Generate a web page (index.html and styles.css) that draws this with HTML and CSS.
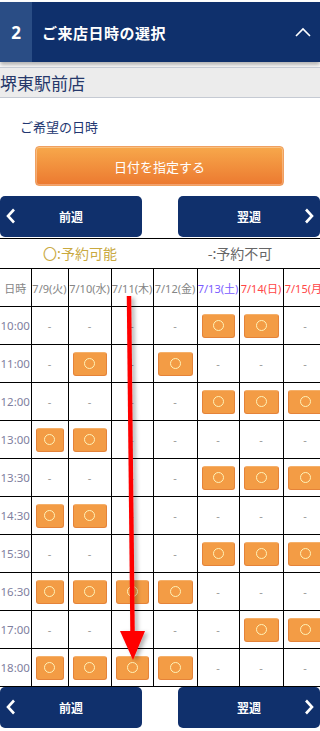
FILE: index.html
```html
<!DOCTYPE html>
<html lang="ja">

<head>
    <meta charset="UTF-8">
    <meta name="viewport" content="width=device-width, initial-scale=1.0">
    <title>ご来店日時の選択</title>
    <link rel="stylesheet" href="styles.css">
</head>

<body>
    <div class="step-head">
        <div class="step-num">2</div>
        <div class="step-title">ご来店日時の選択</div>
        <svg class="step-toggle" width="16" height="10" viewBox="0 0 16 10">
            <polyline points="1,9 8,2 15,9" fill="none" stroke="#fff" stroke-width="1.6" />
        </svg>
    </div>

    <div class="store-bar">堺東駅前店</div>

    <p class="wish-label">ご希望の日時</p>
    <button class="date-btn">日付を指定する</button>

    <div class="week-nav">
        <button class="week-btn prev">
            <svg class="chev" width="10" height="16" viewBox="0 0 10 16">
                <polyline points="8,1.5 2,8 8,14.5" fill="none" stroke="#fff" stroke-width="2.6" />
            </svg>
            前週
        </button>
        <button class="week-btn next">
            翌週
            <svg class="chev" width="10" height="16" viewBox="0 0 10 16">
                <polyline points="2,1.5 8,8 2,14.5" fill="none" stroke="#fff" stroke-width="2.6" />
            </svg>
        </button>
    </div>

    <div class="schedule">
        <div class="legend">
            <span class="legend-ok">〇:予約可能</span>
            <span class="legend-ng">-:予約不可</span>
        </div>
        <table class="slots">
            <colgroup>
                <col style="width:31px">
                <col style="width:37px">
                <col style="width:43px">
                <col style="width:42px">
                <col style="width:44px">
                <col style="width:42px">
                <col style="width:44px">
                <col style="width:44px">
            </colgroup>
            <tr class="head-row">
                <th>日時</th>
                <th>7/9(火)</th>
                <th>7/10(水)</th>
                <th>7/11(木)</th>
                <th>7/12(金)</th>
                <th class="sat">7/13(土)</th>
                <th class="sun">7/14(日)</th>
                <th class="sun">7/15(月)</th>
            </tr>
            <tr>
                <td class="time">10:00</td>
                <td>-</td><td>-</td><td>-</td><td>-</td>
                <td><button class="slot"><i></i></button></td>
                <td><button class="slot"><i></i></button></td>
                <td>-</td>
            </tr>
            <tr>
                <td class="time">11:00</td>
                <td>-</td>
                <td><button class="slot"><i></i></button></td>
                <td>-</td>
                <td><button class="slot"><i></i></button></td>
                <td>-</td><td>-</td><td>-</td>
            </tr>
            <tr>
                <td class="time">12:00</td>
                <td>-</td><td>-</td><td>-</td><td>-</td>
                <td><button class="slot"><i></i></button></td>
                <td><button class="slot"><i></i></button></td>
                <td><button class="slot"><i></i></button></td>
            </tr>
            <tr>
                <td class="time">13:00</td>
                <td><button class="slot"><i></i></button></td>
                <td><button class="slot"><i></i></button></td>
                <td>-</td><td>-</td><td>-</td><td>-</td><td>-</td>
            </tr>
            <tr>
                <td class="time">13:30</td>
                <td>-</td><td>-</td><td>-</td><td>-</td>
                <td><button class="slot"><i></i></button></td>
                <td><button class="slot"><i></i></button></td>
                <td><button class="slot"><i></i></button></td>
            </tr>
            <tr>
                <td class="time">14:30</td>
                <td><button class="slot"><i></i></button></td>
                <td><button class="slot"><i></i></button></td>
                <td>-</td><td>-</td><td>-</td><td>-</td><td>-</td>
            </tr>
            <tr>
                <td class="time">15:30</td>
                <td>-</td><td>-</td><td>-</td><td>-</td>
                <td><button class="slot"><i></i></button></td>
                <td><button class="slot"><i></i></button></td>
                <td><button class="slot"><i></i></button></td>
            </tr>
            <tr>
                <td class="time">16:30</td>
                <td><button class="slot"><i></i></button></td>
                <td><button class="slot"><i></i></button></td>
                <td><button class="slot"><i></i></button></td>
                <td><button class="slot"><i></i></button></td>
                <td>-</td><td>-</td><td>-</td>
            </tr>
            <tr>
                <td class="time">17:00</td>
                <td>-</td><td>-</td><td>-</td><td>-</td><td>-</td>
                <td><button class="slot"><i></i></button></td>
                <td><button class="slot"><i></i></button></td>
            </tr>
            <tr>
                <td class="time">18:00</td>
                <td><button class="slot"><i></i></button></td>
                <td><button class="slot"><i></i></button></td>
                <td><button class="slot"><i></i></button></td>
                <td><button class="slot"><i></i></button></td>
                <td>-</td><td>-</td><td>-</td>
            </tr>
        </table>

        <!-- annotation arrow -->
        <svg class="arrow" width="320" height="440" viewBox="0 0 320 440">
            <defs>
                <filter id="shade" x="-50%" y="-10%" width="200%" height="120%">
                    <feDropShadow dx="3" dy="2" stdDeviation="2" flood-color="#000" flood-opacity="0.3" />
                </filter>
            </defs>
            <g filter="url(#shade)">
                <line x1="129" y1="58" x2="132.6" y2="400" stroke="#ff0000" stroke-width="4.5" />
                <polygon points="120,393 145,393 133,422" fill="#ff0000" />
            </g>
        </svg>
    </div>

    <div class="week-nav bottom">
        <button class="week-btn prev">
            <svg class="chev" width="10" height="16" viewBox="0 0 10 16">
                <polyline points="8,1.5 2,8 8,14.5" fill="none" stroke="#fff" stroke-width="2.6" />
            </svg>
            前週
        </button>
        <button class="week-btn next">
            翌週
            <svg class="chev" width="10" height="16" viewBox="0 0 10 16">
                <polyline points="2,1.5 8,8 2,14.5" fill="none" stroke="#fff" stroke-width="2.6" />
            </svg>
        </button>
    </div>
</body>

</html>
```

FILE: styles.css
```css
* {
    padding: 0;
    margin: 0;
    box-sizing: border-box;
}

html,
body {
    width: 100%;
    background-color: #fff;
    font-family: "Noto Sans", "Noto Sans CJK JP", sans-serif;
    overflow: hidden;
}

body {
    padding-top: 2px;
}

button {
    font-family: inherit;
    border: none;
    cursor: pointer;
}

/* step header */
.step-head {
    display: flex;
    align-items: center;
    height: 60px;
    background-color: #0f306c;
    color: #fff;
    box-shadow: 0 3px 4px rgba(0, 0, 0, 0.3);
}

.step-num {
    width: 32px;
    height: 100%;
    display: flex;
    align-items: center;
    justify-content: center;
    background-color: #2a4d85;
    font-size: 17px;
    font-weight: bold;
}

.step-title {
    flex: 1;
    padding-left: 10px;
    font-family: "Noto Sans CJK JP", sans-serif;
    font-size: 15px;
    font-weight: bold;
    letter-spacing: 0.5px;
}

.step-toggle {
    margin-right: 9px;
}

.store-bar {
    margin-top: 5px;
    height: 31px;
    line-height: 29px;
    background-color: #ececec;
    border-top: 1px solid #c5cad3;
    border-bottom: 1px solid #c5cad3;
    font-family: "Noto Sans CJK JP", sans-serif;
    font-size: 17px;
    color: #26386a;
}

.wish-label {
    margin-top: 20px;
    padding-left: 20px;
    line-height: 18px;
    font-family: "Noto Sans CJK JP", sans-serif;
    font-size: 13px;
    color: #223670;
}

.date-btn {
    display: block;
    margin: 10px 36px 0 35px;
    width: 249px;
    height: 40px;
    border-radius: 4px;
    background-image: linear-gradient(to bottom, #f7a84b, #ec7930);
    border: 1px solid #f0a060;
    box-shadow: inset 0 0 0 1px rgba(255, 255, 255, 0.3);
    color: #fff;
    font-family: "Noto Sans CJK JP", sans-serif;
    font-size: 13px;
}

/* prev / next week */
.week-nav {
    display: flex;
    justify-content: space-between;
    margin-top: 10px;
    height: 42px;
}

.week-nav.bottom {
    margin-top: 0;
    height: 41px;
}

.week-btn {
    position: relative;
    width: 142px;
    height: 41px;
    background-color: #10306c;
    border-radius: 5px;
    color: #fff;
    font-family: "Noto Sans CJK JP", sans-serif;
    font-size: 12px;
    font-weight: bold;
}

.week-btn .chev {
    position: absolute;
    top: 12px;
}

.week-btn.prev .chev {
    left: 6px;
}

.week-btn.next .chev {
    right: 6px;
}

/* schedule table */
.schedule {
    position: relative;
    width: 320px;
    overflow: hidden;
}

.legend {
    display: flex;
    height: 30px;
    border-top: 1px solid #000;
    font-family: "Noto Sans CJK JP", sans-serif;
    font-size: 14px;
}

.legend span {
    flex: 1;
    text-align: center;
    line-height: 29px;
}

.legend-ok {
    color: #c9a93f;
    padding-left: 0;
}

.legend-ng {
    color: #666;
}

.slots {
    table-layout: fixed;
    width: 327px;
    border-collapse: collapse;
}

.slots th,
.slots td {
    height: 38px;
    border: 1px solid #000;
    text-align: center;
    vertical-align: middle;
    font-weight: normal;
    font-size: 11px;
    color: #999;
    white-space: nowrap;
    padding: 0;
}

.slots tr > :first-child {
    border-left: none;
}

.slots th {
    color: #858585;
    font-family: "Noto Sans", "Noto Sans CJK JP", sans-serif;
}

.slots th:first-child {
    color: #858585;
    font-family: "Noto Sans CJK JP", sans-serif;
}

.slots th.sat {
    color: #7a5cff;
}

.slots th.sun {
    color: #ff4646;
}

.slots td.time {
    color: #7f80a0;
    font-size: 11.5px;
}

.slot {
    display: flex;
    align-items: center;
    justify-content: center;
    width: calc(100% - 8px);
    height: 24px;
    margin: 0 auto;
    background-color: #f39c45;
    border: 1px solid #e58339;
    border-top-color: #f5b06a;
    border-radius: 3px;
}

.slot i {
    display: block;
    width: 11px;
    height: 11px;
    border: 1.4px solid #fff3b8;
    border-radius: 50%;
}

.arrow {
    position: absolute;
    top: 0;
    left: 0;
    pointer-events: none;
}
```
